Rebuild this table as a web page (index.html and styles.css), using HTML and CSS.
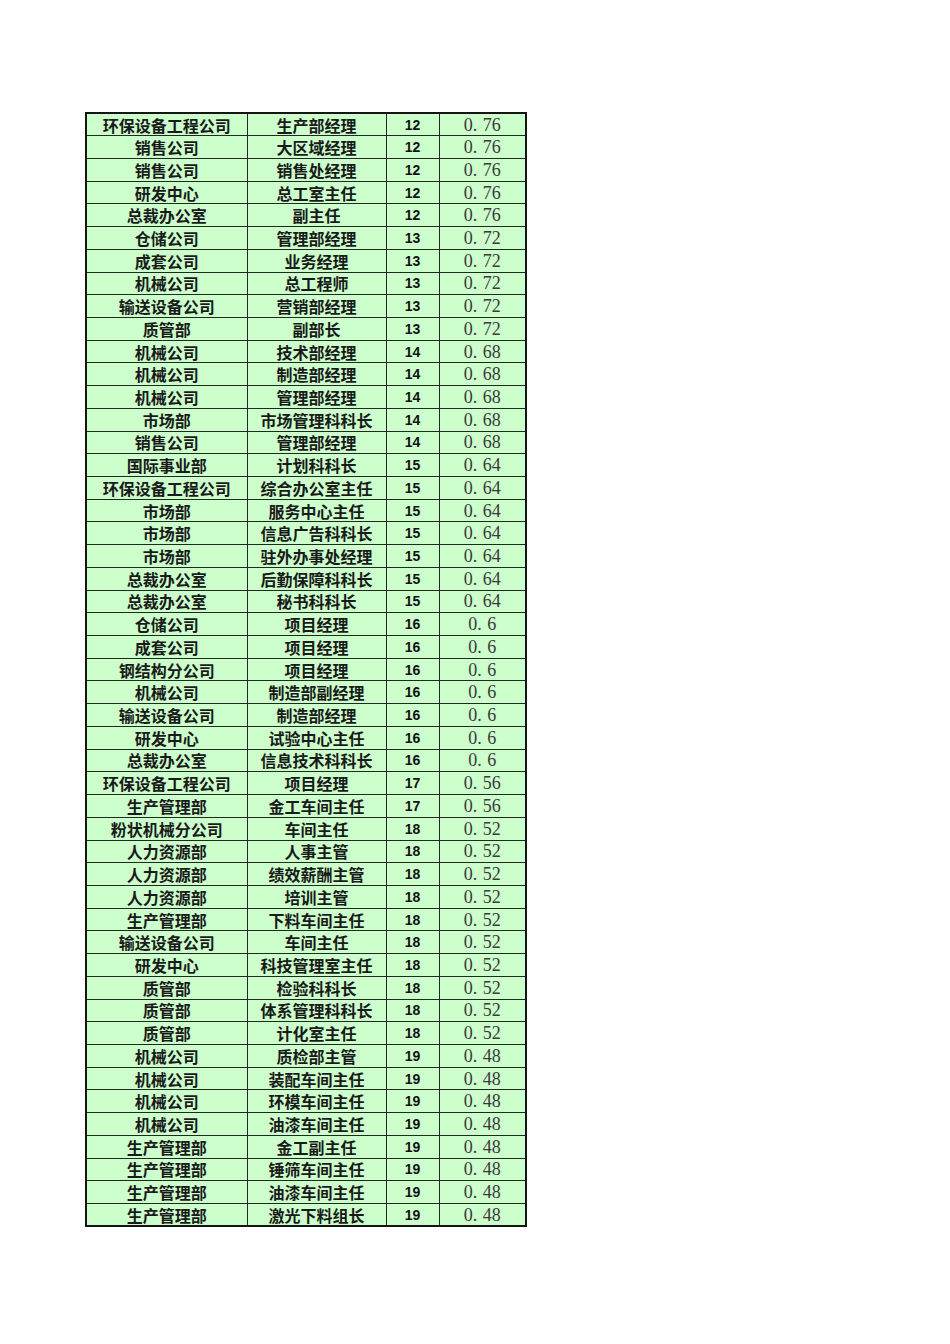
FILE: index.html
```html
<!DOCTYPE html>
<html lang="zh">
<head>
<meta charset="utf-8">
<title>职位等级表</title>
<link rel="stylesheet" href="styles.css">
</head>
<body>
<div class="page">
<table class="grid">
<colgroup><col class="c1"><col class="c2"><col class="c3"><col class="c4"></colgroup>
<tbody>
<tr><td class="t">环保设备工程公司</td><td class="t">生产部经理</td><td class="n">12</td><td class="v">0<span class="d">.</span>76</td></tr>
<tr><td class="t">销售公司</td><td class="t">大区域经理</td><td class="n">12</td><td class="v">0<span class="d">.</span>76</td></tr>
<tr><td class="t">销售公司</td><td class="t">销售处经理</td><td class="n">12</td><td class="v">0<span class="d">.</span>76</td></tr>
<tr><td class="t">研发中心</td><td class="t">总工室主任</td><td class="n">12</td><td class="v">0<span class="d">.</span>76</td></tr>
<tr><td class="t">总裁办公室</td><td class="t">副主任</td><td class="n">12</td><td class="v">0<span class="d">.</span>76</td></tr>
<tr><td class="t">仓储公司</td><td class="t">管理部经理</td><td class="n">13</td><td class="v">0<span class="d">.</span>72</td></tr>
<tr><td class="t">成套公司</td><td class="t">业务经理</td><td class="n">13</td><td class="v">0<span class="d">.</span>72</td></tr>
<tr><td class="t">机械公司</td><td class="t">总工程师</td><td class="n">13</td><td class="v">0<span class="d">.</span>72</td></tr>
<tr><td class="t">输送设备公司</td><td class="t">营销部经理</td><td class="n">13</td><td class="v">0<span class="d">.</span>72</td></tr>
<tr><td class="t">质管部</td><td class="t">副部长</td><td class="n">13</td><td class="v">0<span class="d">.</span>72</td></tr>
<tr><td class="t">机械公司</td><td class="t">技术部经理</td><td class="n">14</td><td class="v">0<span class="d">.</span>68</td></tr>
<tr><td class="t">机械公司</td><td class="t">制造部经理</td><td class="n">14</td><td class="v">0<span class="d">.</span>68</td></tr>
<tr><td class="t">机械公司</td><td class="t">管理部经理</td><td class="n">14</td><td class="v">0<span class="d">.</span>68</td></tr>
<tr><td class="t">市场部</td><td class="t">市场管理科科长</td><td class="n">14</td><td class="v">0<span class="d">.</span>68</td></tr>
<tr><td class="t">销售公司</td><td class="t">管理部经理</td><td class="n">14</td><td class="v">0<span class="d">.</span>68</td></tr>
<tr><td class="t">国际事业部</td><td class="t">计划科科长</td><td class="n">15</td><td class="v">0<span class="d">.</span>64</td></tr>
<tr><td class="t">环保设备工程公司</td><td class="t">综合办公室主任</td><td class="n">15</td><td class="v">0<span class="d">.</span>64</td></tr>
<tr><td class="t">市场部</td><td class="t">服务中心主任</td><td class="n">15</td><td class="v">0<span class="d">.</span>64</td></tr>
<tr><td class="t">市场部</td><td class="t">信息广告科科长</td><td class="n">15</td><td class="v">0<span class="d">.</span>64</td></tr>
<tr><td class="t">市场部</td><td class="t">驻外办事处经理</td><td class="n">15</td><td class="v">0<span class="d">.</span>64</td></tr>
<tr><td class="t">总裁办公室</td><td class="t">后勤保障科科长</td><td class="n">15</td><td class="v">0<span class="d">.</span>64</td></tr>
<tr><td class="t">总裁办公室</td><td class="t">秘书科科长</td><td class="n">15</td><td class="v">0<span class="d">.</span>64</td></tr>
<tr><td class="t">仓储公司</td><td class="t">项目经理</td><td class="n">16</td><td class="v">0<span class="d">.</span>6</td></tr>
<tr><td class="t">成套公司</td><td class="t">项目经理</td><td class="n">16</td><td class="v">0<span class="d">.</span>6</td></tr>
<tr><td class="t">钢结构分公司</td><td class="t">项目经理</td><td class="n">16</td><td class="v">0<span class="d">.</span>6</td></tr>
<tr><td class="t">机械公司</td><td class="t">制造部副经理</td><td class="n">16</td><td class="v">0<span class="d">.</span>6</td></tr>
<tr><td class="t">输送设备公司</td><td class="t">制造部经理</td><td class="n">16</td><td class="v">0<span class="d">.</span>6</td></tr>
<tr><td class="t">研发中心</td><td class="t">试验中心主任</td><td class="n">16</td><td class="v">0<span class="d">.</span>6</td></tr>
<tr><td class="t">总裁办公室</td><td class="t">信息技术科科长</td><td class="n">16</td><td class="v">0<span class="d">.</span>6</td></tr>
<tr><td class="t">环保设备工程公司</td><td class="t">项目经理</td><td class="n">17</td><td class="v">0<span class="d">.</span>56</td></tr>
<tr><td class="t">生产管理部</td><td class="t">金工车间主任</td><td class="n">17</td><td class="v">0<span class="d">.</span>56</td></tr>
<tr><td class="t">粉状机械分公司</td><td class="t">车间主任</td><td class="n">18</td><td class="v">0<span class="d">.</span>52</td></tr>
<tr><td class="t">人力资源部</td><td class="t">人事主管</td><td class="n">18</td><td class="v">0<span class="d">.</span>52</td></tr>
<tr><td class="t">人力资源部</td><td class="t">绩效薪酬主管</td><td class="n">18</td><td class="v">0<span class="d">.</span>52</td></tr>
<tr><td class="t">人力资源部</td><td class="t">培训主管</td><td class="n">18</td><td class="v">0<span class="d">.</span>52</td></tr>
<tr><td class="t">生产管理部</td><td class="t">下料车间主任</td><td class="n">18</td><td class="v">0<span class="d">.</span>52</td></tr>
<tr><td class="t">输送设备公司</td><td class="t">车间主任</td><td class="n">18</td><td class="v">0<span class="d">.</span>52</td></tr>
<tr><td class="t">研发中心</td><td class="t">科技管理室主任</td><td class="n">18</td><td class="v">0<span class="d">.</span>52</td></tr>
<tr><td class="t">质管部</td><td class="t">检验科科长</td><td class="n">18</td><td class="v">0<span class="d">.</span>52</td></tr>
<tr><td class="t">质管部</td><td class="t">体系管理科科长</td><td class="n">18</td><td class="v">0<span class="d">.</span>52</td></tr>
<tr><td class="t">质管部</td><td class="t">计化室主任</td><td class="n">18</td><td class="v">0<span class="d">.</span>52</td></tr>
<tr><td class="t">机械公司</td><td class="t">质检部主管</td><td class="n">19</td><td class="v">0<span class="d">.</span>48</td></tr>
<tr><td class="t">机械公司</td><td class="t">装配车间主任</td><td class="n">19</td><td class="v">0<span class="d">.</span>48</td></tr>
<tr><td class="t">机械公司</td><td class="t">环模车间主任</td><td class="n">19</td><td class="v">0<span class="d">.</span>48</td></tr>
<tr><td class="t">机械公司</td><td class="t">油漆车间主任</td><td class="n">19</td><td class="v">0<span class="d">.</span>48</td></tr>
<tr><td class="t">生产管理部</td><td class="t">金工副主任</td><td class="n">19</td><td class="v">0<span class="d">.</span>48</td></tr>
<tr><td class="t">生产管理部</td><td class="t">锤筛车间主任</td><td class="n">19</td><td class="v">0<span class="d">.</span>48</td></tr>
<tr><td class="t">生产管理部</td><td class="t">油漆车间主任</td><td class="n">19</td><td class="v">0<span class="d">.</span>48</td></tr>
<tr><td class="t">生产管理部</td><td class="t">激光下料组长</td><td class="n">19</td><td class="v">0<span class="d">.</span>48</td></tr>
</tbody>
</table>
</div>
</body>
</html>
```

FILE: styles.css
```css
html, body {
  margin: 0;
  padding: 0;
  background: #ffffff;
}

.page {
  width: 950px;
  height: 1344px;
  padding: 112px 0 0 85px;
  box-sizing: border-box;
}

.grid {
  border-collapse: collapse;
  table-layout: fixed;
  width: 440px;
  background: #ccffcc;
  border: 2px solid #151515;
}

.c1 { width: 161px; }
.c2 { width: 139px; }
.c3 { width: 53px; }
.c4 { width: 87px; }

.grid tr {
  height: 22.73px;
}

.grid td {
  border: 1px solid #1f2a1f;
  padding: 0;
  text-align: center;
  vertical-align: middle;
  white-space: nowrap;
  overflow: hidden;
  line-height: 16px;
}

.t {
  font-family: "Noto Sans CJK SC", "Noto Sans", sans-serif;
  font-weight: 700;
  font-size: 16px;
  color: #1a1a1a;
}

.n {
  font-family: "Liberation Sans", Arial, sans-serif;
  font-weight: 700;
  font-size: 14px;
  color: #111;
  padding-top: 2px;
}

.v {
  font-family: "Liberation Serif", "Times New Roman", serif;
  font-size: 18px;
  color: #3a3a3a;
  padding-bottom: 1px;
}

.d {
  display: inline-block;
  width: 10px;
  text-align: left;
}
```
